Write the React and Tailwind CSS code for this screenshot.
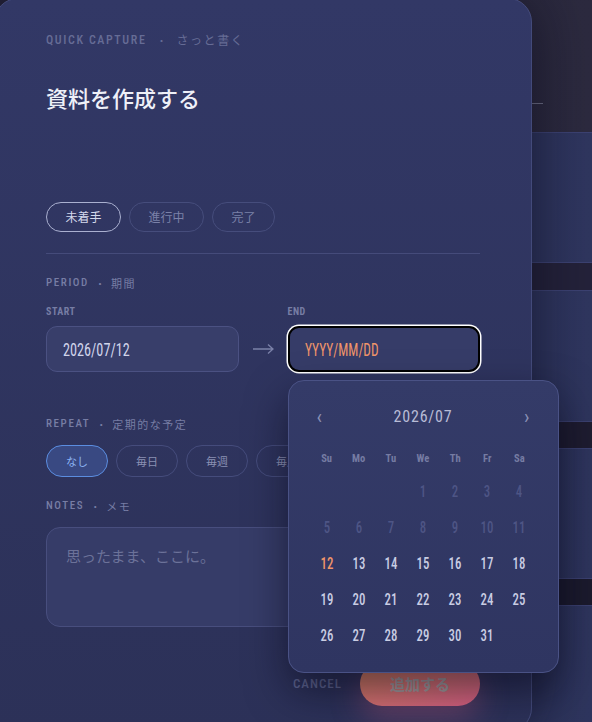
import React from "react";

const COND = "font-['Roboto','Noto_Sans_CJK_JP',sans-serif] font-stretch-[75%]";
const JP = "font-['Noto_Sans_CJK_JP',sans-serif]";

const WEEK = ["Su", "Mo", "Tu", "We", "Th", "Fr", "Sa"];

function Calendar() {
  const cells = [];
  for (let i = 0; i < 3; i++) cells.push(null);
  for (let d = 1; d <= 31; d++) cells.push(d);
  return (
    <div className="absolute left-0 top-full mt-[8px] w-[271px] h-[293px] rounded-[16px] border border-[#4a5285] bg-gradient-to-b from-[#343b68] to-[#2f3561] shadow-[0_18px_40px_rgba(8,8,24,0.55)] px-[22px] pt-[24px] pb-[20px] z-20">
      <div className="flex items-center justify-between h-[24px] px-[6px]">
        <span className={`${COND} text-[20px] text-[#8a90b5] leading-none`}>‹</span>
        <span className={`${COND} text-[16px] tracking-[0.8px] text-[#b8bcd6] leading-none`}>2026/07</span>
        <span className={`${COND} text-[20px] text-[#8a90b5] leading-none`}>›</span>
      </div>
      <div className="grid grid-cols-7 mt-[20px] h-[20px] items-center">
        {WEEK.map((w) => (
          <span key={w} className={`${COND} text-center text-[10.5px] font-bold text-[#767ca3]`}>{w}</span>
        ))}
      </div>
      <div className="grid grid-cols-7 mt-[5px]">
        {cells.map((d, i) => (
          <span
            key={i}
            className={`${COND} h-[36px] flex items-center justify-center text-[16px] font-medium ${
              d === null ? "" : d < 12 ? "text-[#4e5585]" : d === 12 ? "text-[#f0956a]" : "text-[#c9cde3]"
            }`}
          >
            <span className="inline-block scale-x-[0.8]">{d}</span>
          </span>
        ))}
      </div>
    </div>
  );
}

function SectionLabel({ en, jp }) {
  return (
    <div className="flex items-center h-[14px] text-[#777da4]">
      <span className={`${COND} text-[11px] tracking-[1.6px] font-medium`}>{en}</span>
      <span className={`${JP} text-[10px] mx-[6px]`}>・</span>
      <span className={`${JP} text-[11px] tracking-[1.5px]`}>{jp}</span>
    </div>
  );
}

export default function App() {
  return (
    <div className="relative w-[592px] h-[722px] overflow-hidden bg-[#29273b]">
      {/* list behind the sheet */}
      <div className="flex flex-col">
        <div className="h-[132px] bg-gradient-to-r from-[#252339] to-[#2c2a3f]">
          <div className="w-[543px] h-[104px] border-b border-[#6e6f86]" />
        </div>
        <div className="h-[131px] border-y border-[#3c4272] bg-gradient-to-r from-[#262b4f] to-[#2f365f]" />
        <div className="h-[27px] bg-[#24223a]" />
        <div className="h-[132px] border-y border-[#3c4272] bg-gradient-to-r from-[#262b4f] to-[#2f365f]" />
        <div className="h-[26px] bg-[#1f1d31]" />
        <div className="h-[131px] border-y border-[#3c4272] bg-gradient-to-r from-[#262b4f] to-[#2f365f]" />
        <div className="h-[26px] bg-[#1c1b2e]" />
        <div className="h-[140px] border-t border-[#3c4272] bg-gradient-to-r from-[#262b4f] to-[#2f365f]" />
      </div>

      {/* quick capture sheet */}
      <div className="absolute left-[-6px] top-[-2px] w-[538px] h-[734px] rounded-[24px] border border-[#434a7a] bg-gradient-to-b from-[#323866] to-[#2c3158] shadow-[0_0_60px_rgba(8,8,24,0.6)] pl-[51px] pr-[51px] pt-[33px] z-10">
        <div className="w-[434px] flex flex-col">
          <div className="flex items-center h-[16px] text-[#666c95]">
            <span className={`${COND} text-[12px] tracking-[1.6px] font-medium`}>QUICK CAPTURE</span>
            <span className={`${JP} text-[10px] mx-[10px]`}>・</span>
            <span className={`${JP} text-[12px] tracking-[1.6px]`}>さっと書く</span>
          </div>

          <h1 className={`${JP} mt-[35px] h-[28px] leading-[28px] text-[22px] font-medium text-[#eef0f8]`}>資料を作成する</h1>

          <div className="mt-[91px] flex gap-[8px]">
            <button className={`${JP} h-[30px] px-[18.5px] rounded-full border border-[#aab0d0] text-[12px] text-[#d4d8ec]`}>未着手</button>
            <button className={`${JP} h-[30px] px-[18.5px] rounded-full border border-[#464d7c] text-[12px] text-[#7b81a8]`}>進行中</button>
            <button className={`${JP} h-[30px] px-[18.5px] rounded-full border border-[#464d7c] text-[12px] text-[#7b81a8]`}>完了</button>
          </div>

          <div className="mt-[21px] h-px bg-[#454b7a]" />

          <div className="mt-[22px]">
            <SectionLabel en="PERIOD" jp="期間" />
          </div>

          <div className="mt-[16px] flex items-end">
            <div className="flex-1 flex flex-col">
              <span className={`${COND} h-[12px] leading-[12px] text-[10px] font-bold tracking-[0.5px] text-[#777da4]`}>START</span>
              <div className="mt-[8px] h-[46px] rounded-[11px] border border-[#4b5182] bg-[#383e6a] flex items-center px-[16px]">
                <span className={`${COND} inline-block origin-left scale-x-[0.79] text-[18px] text-[#d0d4ea]`}>2026/07/12</span>
              </div>
            </div>
            <div className="w-[49px] h-[46px] flex items-center justify-center text-[#7b81a8]">
              <svg width="21" height="10" viewBox="0 0 21 10" fill="none" stroke="currentColor" strokeWidth="1.3">
                <path d="M0 5H20M15 0.5L20 5L15 9.5" />
              </svg>
            </div>
            <div className="relative flex-1 flex flex-col">
              <span className={`${COND} h-[12px] leading-[12px] text-[10px] font-bold tracking-[0.5px] text-[#777da4]`}>END</span>
              <div className="mt-[8px] h-[46px] rounded-[11px] border-2 border-black bg-[#363c68] shadow-[0_0_0_1.5px_#ffffff] flex items-center px-[15px]">
                <span className={`${COND} inline-block origin-left scale-x-[0.74] text-[18px] text-[#f0956a]`}>YYYY/MM/DD</span>
              </div>
              <Calendar />
            </div>
          </div>

          <div className="mt-[45px]">
            <SectionLabel en="REPEAT" jp="定期的な予定" />
          </div>

          <div className="mt-[14px] flex gap-[8px]">
            <button className={`${JP} h-[32px] px-[19px] rounded-full border border-[#5b8de0] bg-[#394982] text-[11px] text-[#8cb4f2]`}>なし</button>
            <button className={`${JP} h-[32px] px-[19px] rounded-full border border-[#454c7c] text-[11px] text-[#8a90b3]`}>毎日</button>
            <button className={`${JP} h-[32px] px-[19px] rounded-full border border-[#454c7c] text-[11px] text-[#8a90b3]`}>毎週</button>
            <button className={`${JP} h-[32px] px-[19px] rounded-full border border-[#454c7c] text-[11px] text-[#8a90b3]`}>毎月</button>
          </div>

          <div className="mt-[22px]">
            <SectionLabel en="NOTES" jp="メモ" />
          </div>

          <div className="mt-[14px] h-[100px] rounded-[14px] border border-[#484e7e] bg-[#363c68] px-[19px] pt-[16px]">
            <span className={`${JP} text-[15px] text-[#6c7299]`}>思ったまま、ここに。</span>
          </div>

          <div className="mt-[35px] flex items-center justify-end gap-[18px]">
            <span className={`${COND} text-[13px] font-medium tracking-[1px] text-[#5f6590]`}>CANCEL</span>
            <button className={`${JP} w-[120px] h-[44px] rounded-full bg-gradient-to-br from-[#d9835b] to-[#d55e82] text-[15px] font-bold text-[#a59e9f] shadow-[0_12px_30px_rgba(214,94,128,0.35)]`}>追加する</button>
          </div>
        </div>
      </div>
    </div>
  );
}
